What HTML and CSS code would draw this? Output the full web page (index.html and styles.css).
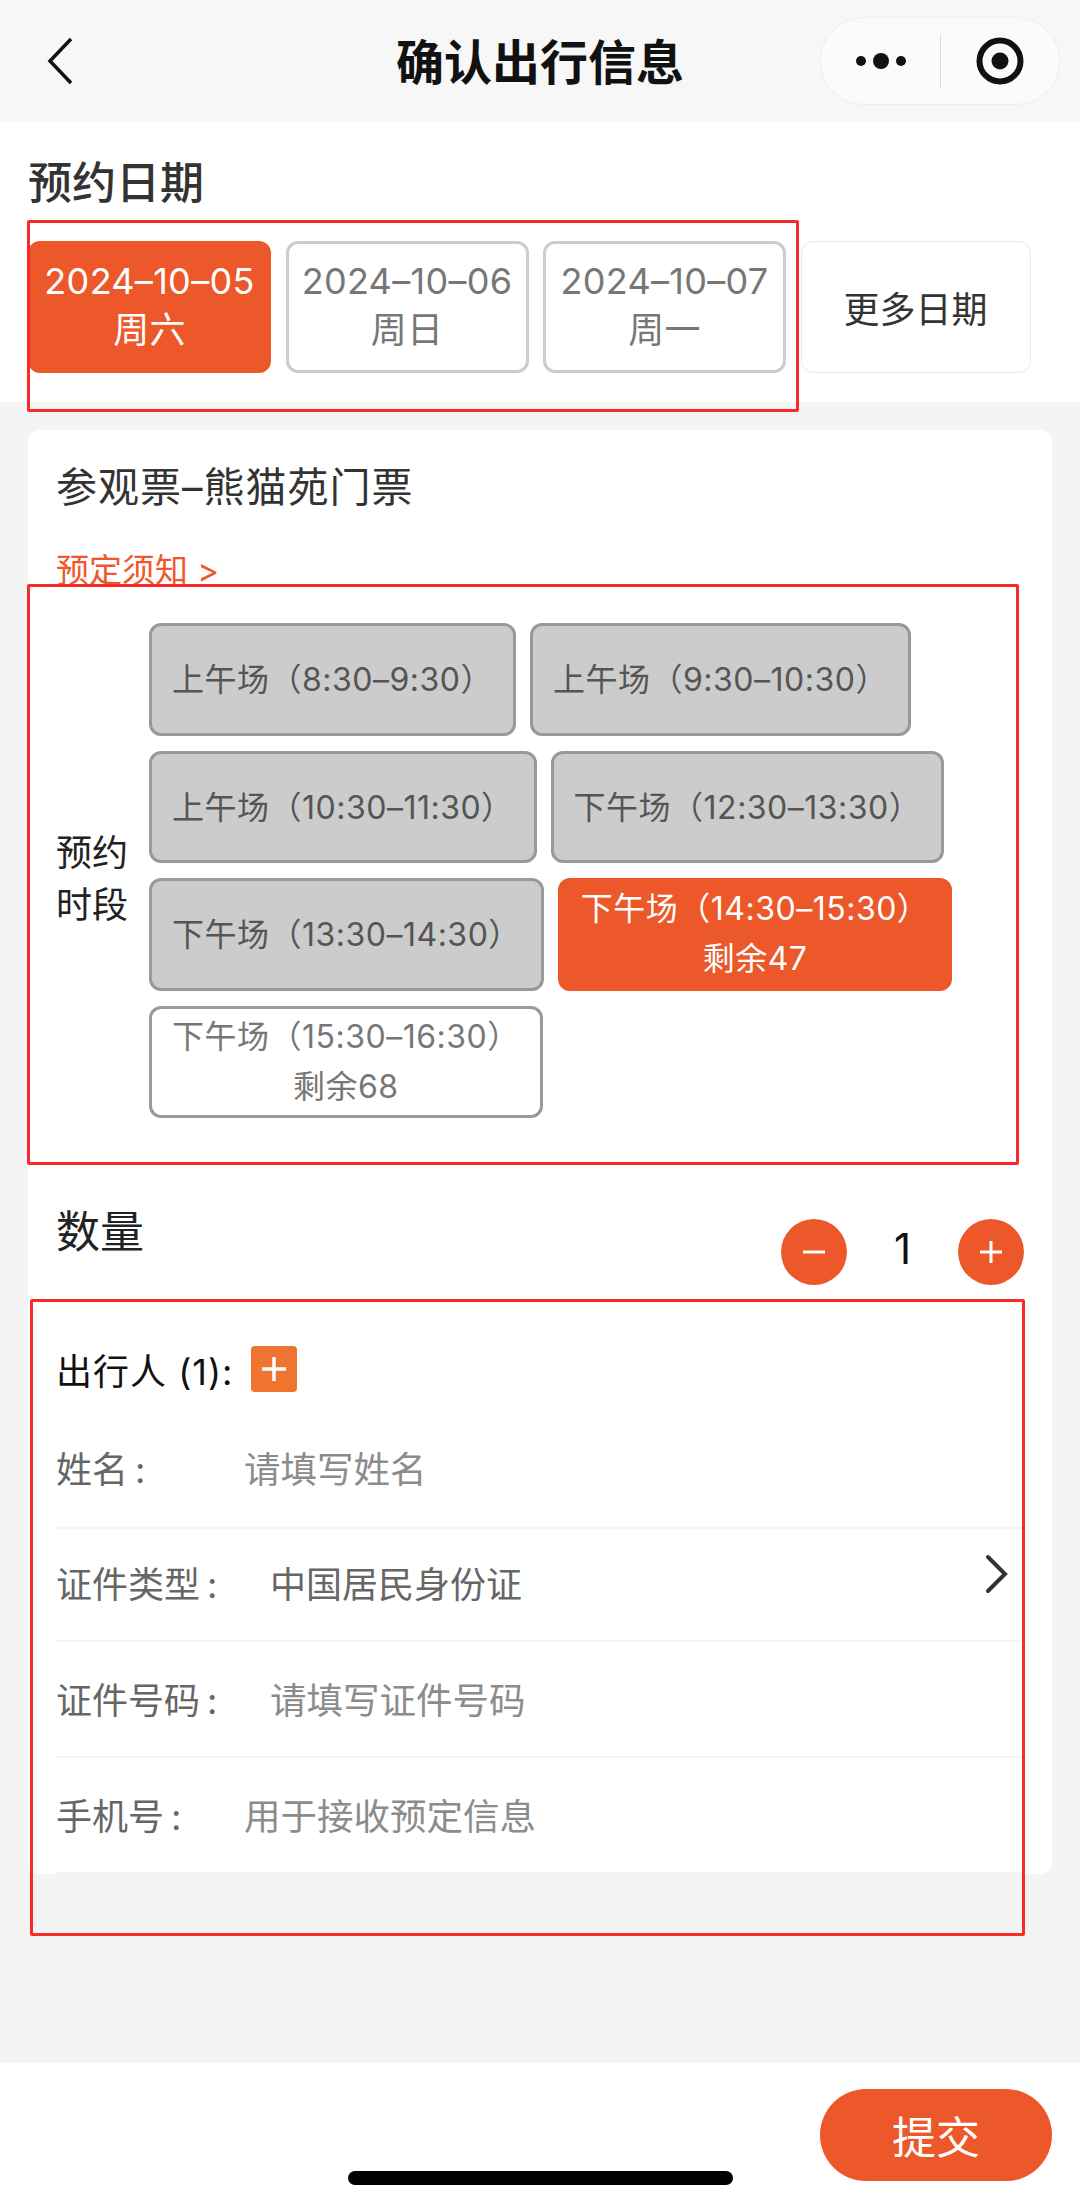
FILE: index.html
```html
<!DOCTYPE html>
<html lang="zh-CN">
<head>
    <meta charset="UTF-8">
    <meta name="viewport" content="width=device-width, initial-scale=1.0">
    <title>确认出行信息</title>
    <link rel="stylesheet" href="styles.css">
</head>
<body>
    <div class="page">
        <header class="nav">
            <svg class="nav-back" width="26" height="48" viewBox="0 0 26 48"><path d="M24 2 L3 24 L24 46" fill="none" stroke="#111" stroke-width="3.5"/></svg>
            <h1 class="nav-title">确认出行信息</h1>
            <div class="capsule">
                <svg class="capsule-more" width="52" height="20" viewBox="0 0 52 20"><circle cx="6" cy="10" r="5"/><circle cx="26" cy="10" r="8"/><circle cx="46" cy="10" r="5"/></svg>
                <span class="capsule-line"></span>
                <svg class="capsule-target" width="48" height="48" viewBox="0 0 48 48"><circle cx="24" cy="24" r="20.5" fill="none" stroke="#111" stroke-width="6"/><circle cx="24" cy="24" r="8.5" fill="#111"/></svg>
            </div>
        </header>

        <section class="dates">
            <h2 class="dates-title">预约日期</h2>
            <div class="date-list">
                <div class="date-item active">2024–10–05<br>周六</div>
                <div class="date-item">2024–10–06<br>周日</div>
                <div class="date-item">2024–10–07<br>周一</div>
                <div class="date-more">更多日期</div>
            </div>
        </section>

        <main class="main">
            <div class="card">
                <div class="ticket-name">参观票–熊猫苑门票</div>
                <div class="notice">预定须知 &gt;</div>

                <div class="slots">
                    <div class="slots-label">预约时段</div>
                    <div class="slot-list">
                        <div class="slot off">上午场（8:30–9:30）</div>
                        <div class="slot off">上午场（9:30–10:30）</div>
                        <div class="slot off">上午场（10:30–11:30）</div>
                        <div class="slot off">下午场（12:30–13:30）</div>
                        <div class="slot off">下午场（13:30–14:30）</div>
                        <div class="slot active">下午场（14:30–15:30）<br>剩余47</div>
                        <div class="slot">下午场（15:30–16:30）<br>剩余68</div>
                    </div>
                </div>

                <div class="qty">
                    <div class="qty-label">数量</div>
                    <div class="stepper">
                        <span class="step-btn"><svg width="24" height="24" viewBox="0 0 24 24"><path d="M1 12 H23" stroke="#fff" stroke-width="3"/></svg></span>
                        <span class="step-num">1</span>
                        <span class="step-btn"><svg width="24" height="24" viewBox="0 0 24 24"><path d="M1 12 H23 M12 1 V23" stroke="#fff" stroke-width="3"/></svg></span>
                    </div>
                </div>

                <div class="people">
                    <span>出行人 (1):</span>
                    <span class="people-add"><svg width="26" height="26" viewBox="0 0 26 26"><path d="M1 13 H25 M13 1 V25" stroke="#fff" stroke-width="3.5"/></svg></span>
                </div>

                <div class="field field-first">
                    <span class="field-label">姓名<i class="colon">:</i></span>
                    <span class="field-hint">请填写姓名</span>
                </div>
                <div class="field field-type">
                    <span class="field-label wide">证件类型<i class="colon">:</i></span>
                    <span class="field-value">中国居民身份证</span>
                    <svg class="field-arrow" width="24" height="40" viewBox="0 0 24 40"><path d="M4 3 L21 20 L4 37" fill="none" stroke="#333" stroke-width="4" stroke-linecap="round"/></svg>
                </div>
                <div class="field">
                    <span class="field-label wide">证件号码<i class="colon">:</i></span>
                    <span class="field-hint">请填写证件号码</span>
                </div>
                <div class="field">
                    <span class="field-label">手机号<i class="colon">:</i></span>
                    <span class="field-hint">用于接收预定信息</span>
                </div>
            </div>
        </main>

        <footer class="bottom">
            <button class="submit">提交</button>
        </footer>

        <div class="home-bar"></div>
        <div class="mark mark-dates"></div>
        <div class="mark mark-slots"></div>
        <div class="mark mark-people"></div>
    </div>
</body>
</html>
```

FILE: styles.css
```css
* { margin: 0; padding: 0; box-sizing: border-box; }
body {
    font-family: Inter, "Noto Sans CJK SC", sans-serif;
    background: #f4f4f4;
    color: #333;
}
.page {
    position: relative;
    display: flex;
    flex-direction: column;
    width: 1080px;
    height: 2207px;
    overflow: hidden;
}

/* nav */
.nav {
    position: relative;
    display: flex;
    align-items: center;
    justify-content: center;
    height: 122px;
    flex: none;
    padding-bottom: 5px;
    background: #f7f7f7;
}
.nav-back { position: absolute; left: 47px; top: 37px; }
.nav-title {
    font-size: 48px;
    font-weight: 700;
    color: #111;
}
.capsule {
    position: absolute;
    left: 820px;
    top: 17px;
    display: flex;
    align-items: center;
    width: 240px;
    height: 88px;
    border: 1px solid #eee;
    border-radius: 44px;
    background: #fbfbfb;
}
.capsule-more { margin-left: 34px; fill: #111; }
.capsule-line { width: 1px; height: 55px; margin-left: 33px; background: #ddd; }
.capsule-target { margin-left: 35px; }

/* dates */
.dates {
    flex: none;
    height: 280px;
    padding: 33px 0 0 28px;
    background: #fff;
}
.dates-title {
    font-size: 44px;
    font-weight: 500;
    line-height: 56px;
    color: #333;
}
.date-list {
    display: flex;
    gap: 14.5px;
    margin-top: 30px;
}
.date-item {
    width: 243px;
    height: 132px;
    border: 3px solid #ccc;
    border-radius: 12px;
    font-size: 36px;
    letter-spacing: 0.3px;
    line-height: 49px;
    padding-top: 13px;
    text-align: center;
    color: #777;
}
.date-item.active {
    border-color: #ec5829;
    background: #ec5829;
    color: #fff;
}
.date-more {
    display: flex;
    align-items: center;
    justify-content: center;
    width: 230px;
    height: 132px;
    border: 1px solid #e8e8e8;
    border-radius: 12px;
    font-size: 36px;
}

/* card */
.main { flex: 1; padding: 28px 28px 0; }
.card {
    height: 1444px;
    padding: 29px 28px 0;
    border-radius: 12px;
    background: #fff;
}
.ticket-name {
    font-size: 41px;
    letter-spacing: 1px;
    line-height: 56px;
    color: #333;
}
.notice {
    margin-top: 33px;
    font-size: 33px;
    line-height: 44px;
    color: #f0572a;
}
.slots {
    display: flex;
    align-items: center;
    margin-top: 31px;
}
.slots-label {
    width: 93px;
    flex: none;
    margin-top: 16px;
    padding-right: 20px;
    font-size: 36px;
    line-height: 52px;
    color: #222;
}
.slot-list {
    display: flex;
    flex-wrap: wrap;
    gap: 15px 14px;
    width: 850px;
}
.slot {
    height: 112.5px;
    padding: 0 20px;
    border: 3px solid #999;
    border-radius: 12px;
    font-size: 32px;
    letter-spacing: 0.5px;
    line-height: 50px;
    padding-top: 3px;
    text-align: center;
    color: #777;
}
.slot.off {
    padding-top: 29px;
    background: #ccc;
    color: #555;
}
.slot.active {
    border-color: #ec5829;
    background: #ec5829;
    color: #fff;
}

/* quantity */
.qty {
    position: relative;
    height: 110px;
    margin-top: 54px;
}
.qty-label {
    padding-top: 30px;
    font-size: 44px;
    line-height: 60px;
    color: #222;
}
.stepper {
    position: absolute;
    right: 0;
    top: 47px;
    display: flex;
    align-items: center;
}
.step-btn {
    display: flex;
    align-items: center;
    justify-content: center;
    width: 66px;
    height: 66px;
    border-radius: 50%;
    background: #ec5829;
}
.step-num {
    width: 111px;
    font-size: 42px;
    text-align: center;
    color: #111;
    margin-top: -8px;
}

/* people */
.people {
    display: flex;
    align-items: center;
    gap: 18px;
    margin-top: 64px;
    height: 46px;
    font-size: 36px;
    letter-spacing: 1px;
    color: #111;
}
.people-add {
    display: flex;
    align-items: center;
    justify-content: center;
    width: 46px;
    height: 46px;
    border-radius: 4px;
    background: #ee7430;
}
.field {
    position: relative;
    display: flex;
    align-items: center;
    height: 116px;
    padding-bottom: 2px;
    border-bottom: 2px solid #f4f4f4;
    font-size: 36px;
}
.field-first {
    height: 122px;
    margin-top: 15px;
    padding-bottom: 0;
}
.field-type {
    height: 113px;
    padding-bottom: 6px;
}
.field-label { width: 188px; color: #666; }
.field-label.wide { width: 214px; }
.colon { margin-left: 7px; font-style: normal; }
.field-hint { font-size: 36.5px; color: #8c8c8c; }
.field-value { color: #666; }
.field-arrow { position: absolute; right: 16px; top: 25px; }

/* bottom */
.bottom {
    display: flex;
    justify-content: flex-end;
    flex: none;
    height: 144px;
    padding: 26px 28px 0 0;
    background: #fff;
}
.submit {
    width: 232px;
    height: 92px;
    border: none;
    border-radius: 46px;
    background: #ec5829;
    color: #fff;
    font-family: inherit;
    font-size: 44px;
}
.home-bar {
    position: absolute;
    left: 348px;
    top: 2171px;
    width: 385px;
    height: 14px;
    border-radius: 7px;
    background: #000;
}

/* red annotation boxes */
.mark {
    position: absolute;
    border: 3px solid #fb2a2a;
    border-radius: 2px;
}
.mark-dates { left: 27px; top: 220px; width: 772px; height: 192px; }
.mark-slots { left: 27px; top: 584px; width: 992px; height: 581px; }
.mark-people { left: 30px; top: 1299px; width: 995px; height: 637px; }
```
